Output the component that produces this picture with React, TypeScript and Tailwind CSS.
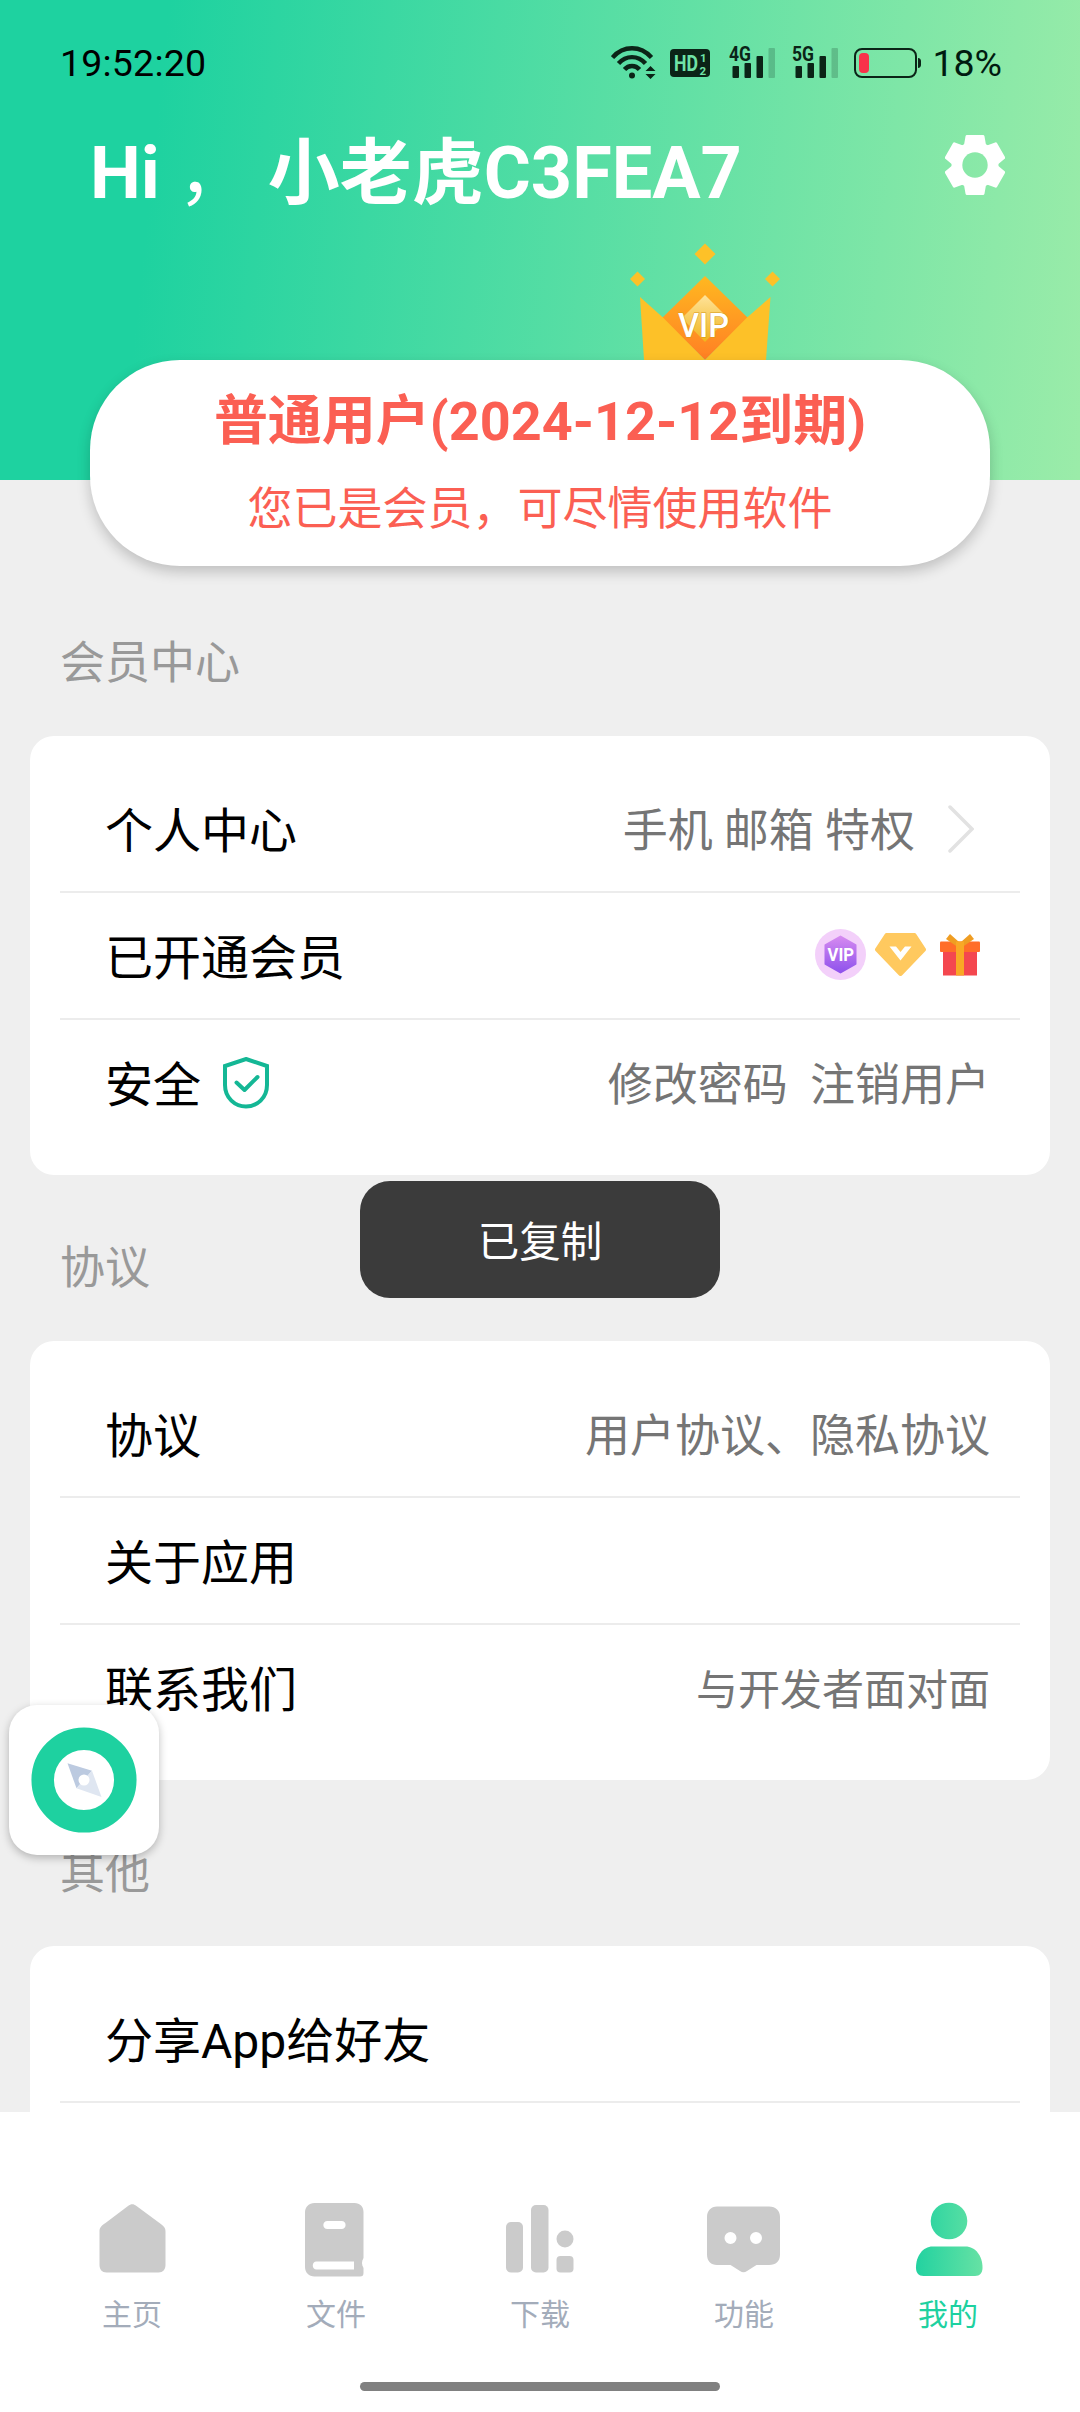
import { useState } from "react";
import type { ReactNode } from "react";

interface Row {
  title: string;
  badge?: ReactNode;
  extra?: string;
  small?: boolean;
  icons?: ReactNode;
}

interface Section {
  label: string;
  rows: Row[];
}

function WifiIcon() {
  return (
    <svg width="46" height="34" viewBox="0 0 46 34" fill="none" stroke="#0b2417" strokeWidth="4.4">
      <path d="M1.5 11.5C12.5 -0.8 29.500 -0.8 40.500 11.500" />
      <path d="M7.500 17.500C15 9 27 9 34.500 17.500" />
      <path d="M13.500 23.500C17.500 18.800 24.500 18.800 28.500 23.500" />
      <circle cx="21" cy="29.500" r="3" fill="#0b2417" stroke="none" />
      <path d="M39.500 20L44.500 25H34.500ZM39.500 33L34.500 28H44.500Z" fill="#0b2417" stroke="none" />
    </svg>
  );
}

function HdIcon() {
  return (
    <svg width="40" height="28" viewBox="0 0 40 28" className="font-bold">
      <rect width="40" height="28" rx="4" fill="#0b2417" />
      <text x="4" y="22" fontSize="22" fill="#6fe3a7" textLength="24" lengthAdjust="spacingAndGlyphs">HD</text>
      <text x="30" y="12.500" fontSize="11.500" fill="#6fe3a7">1</text>
      <text x="29.500" y="25.500" fontSize="11.500" fill="#6fe3a7">2</text>
    </svg>
  );
}

function SignalIcon({ label }: { label: string }) {
  return (
    <svg width="48" height="50" viewBox="0 -8 48 50" fill="#0b2417" className="font-bold">
      <text x="0" y="15" fontSize="20.500" textLength="22" lengthAdjust="spacingAndGlyphs">{label}</text>
      <rect x="3.500" y="20" width="6.500" height="12" rx="1" />
      <rect x="15.500" y="17" width="6.500" height="15" rx="1" />
      <rect x="27.500" y="10" width="6.500" height="22" rx="1" />
      <rect x="39.500" y="2" width="6.500" height="30" rx="1" opacity="0.2" />
    </svg>
  );
}

function BatteryIcon() {
  return (
    <svg width="68" height="30" viewBox="0 0 68 30">
      <rect x="1" y="1" width="61" height="28" rx="7" fill="none" stroke="#0b2417" strokeWidth="2" />
      <rect x="5" y="5" width="10" height="20" rx="4" fill="#f8324a" />
      <path d="M64 10c2 0 3 1.500 3 3v4c0 1.500-1 3-3 3z" fill="#0b2417" />
    </svg>
  );
}

function GearIcon() {
  return (
    <svg width="60" height="60" viewBox="-30 -30 60 60">
      <mask id="gear-hole">
        <rect x="-30" y="-30" width="60" height="60" fill="#fff" />
        <circle r="12.700" fill="#000" />
      </mask>
      <g fill="#fff" stroke="#fff" strokeWidth="3" strokeLinejoin="round" mask="url(#gear-hole)">
        <circle r="22" />
        <path d="M-8 -28.500H8L10 -17V17L8 28.500H-8L-10 17V-17Z" />
        <path d="M-8 -28.500H8L10 -17V17L8 28.500H-8L-10 17V-17Z" transform="rotate(60)" />
        <path d="M-8 -28.500H8L10 -17V17L8 28.500H-8L-10 17V-17Z" transform="rotate(120)" />
      </g>
    </svg>
  );
}

function CrownIcon() {
  return (
    <svg width="152" height="118" viewBox="630 242 152 118" className="font-medium">
      <defs>
        <linearGradient id="crown-gem" x1="0" y1="0" x2="0" y2="1">
          <stop offset="0" stopColor="#ffb820" />
          <stop offset="1" stopColor="#ff7f24" />
        </linearGradient>
        <linearGradient id="crown-core" x1="0" y1="0" x2="0" y2="1">
          <stop offset="0" stopColor="#ffe39a" />
          <stop offset="1" stopColor="#f0b41c" />
        </linearGradient>
      </defs>
      <path d="M705 243.500L715.500 254L705 264.500L694.500 254Z" fill="#fdc128" />
      <path d="M637.500 271.500L645 279L637.500 286.500L630 279Z" fill="#fdc128" />
      <path d="M772.500 271.500L780 279L772.500 286.500L765 279Z" fill="#fdc128" />
      <path d="M705 276L748 318L705 360L662 318Z" fill="url(#crown-gem)" />
      <path d="M705 295L728 318L705 342L682 318Z" fill="url(#crown-core)" />
      <path d="M640 297L663.500 318L705 360H644ZM770.500 297L746.500 318L705 360H766Z" fill="#fdc128" />
      <text x="678" y="337" fontSize="33" fill="#fff" stroke="#d99a18" strokeWidth="1" paintOrder="stroke" textLength="51" lengthAdjust="spacingAndGlyphs">VIP</text>
    </svg>
  );
}

function ShieldIcon() {
  return (
    <svg width="46" height="52" viewBox="0 0 46 52" fill="none" stroke="#14b795" strokeWidth="4">
      <path d="M23 2L44 9V28C44 41 34 49.500 23 49.500C12 49.500 2 41 2 28V9Z" />
      <path d="M13.500 25.500L21.500 33L34.500 20" strokeLinecap="round" strokeLinejoin="round" />
    </svg>
  );
}

function ChevronIcon() {
  return (
    <svg width="26" height="48" viewBox="0 0 26 48" fill="none" stroke="#e2e2e2" strokeWidth="3.500" strokeLinecap="round" className="ml-[33px] mr-[16px]">
      <path d="M2 2L24 24L2 46" />
    </svg>
  );
}

function MemberBadges() {
  return (
    <div className="mr-[1px] flex items-center gap-[9px] pb-[2px]">
      <svg width="51" height="51" viewBox="0 0 51 51" className="font-bold">
        <defs>
          <linearGradient id="vip-hex" x1="0" y1="0" x2="0" y2="1">
            <stop offset="0" stopColor="#d58af0" />
            <stop offset="1" stopColor="#8f52ec" />
          </linearGradient>
        </defs>
        <circle cx="25.500" cy="25.500" r="25.500" fill="#f3d0fa" />
        <path d="M25.500 7.500L40.500 16V35L25.500 43.500L10.500 35V16Z" fill="url(#vip-hex)" stroke="url(#vip-hex)" strokeWidth="2" strokeLinejoin="round" />
        <text x="12.500" y="31.500" fontSize="18" fill="#fff" textLength="26.500" lengthAdjust="spacingAndGlyphs">VIP</text>
      </svg>
      <svg width="51" height="43" viewBox="0 0 51 43">
        <path d="M11.500 2H39.500L49 16.500L25.500 41L2 16.500Z" fill="#ffc95f" stroke="#ffc95f" strokeWidth="4" strokeLinejoin="round" />
        <path d="M14.500 13.500H21L25.500 19L30 13.500H36.500L25.500 27.500Z" fill="#fff" />
      </svg>
      <svg width="40" height="42" viewBox="0 0 40 42" className="ml-[5px] mr-[9px]">
        <path d="M3 17H37V41.500H3Z" fill="#f4474f" />
        <rect y="7.500" width="40" height="10.500" rx="1" fill="#ff6d28" />
        <path d="M10 0L19 8V14L6 5Z" fill="#ef9d22" />
        <path d="M30 0L21 8V14L34 5Z" fill="#ef9d22" />
        <rect x="16" y="7.500" width="8" height="34" fill="#f9a825" />
      </svg>
    </div>
  );
}

const sections: Section[] = [
  {
    label: "会员中心",
    rows: [
      { title: "个人中心", extra: "手机 邮箱 特权", icons: <ChevronIcon /> },
      { title: "已开通会员", icons: <MemberBadges /> },
      { title: "安全", badge: <ShieldIcon />, extra: "修改密码  注销用户" },
    ],
  },
  {
    label: "协议",
    rows: [
      { title: "协议", extra: "用户协议、隐私协议" },
      { title: "关于应用" },
      { title: "联系我们", extra: "与开发者面对面", small: true },
    ],
  },
  {
    label: "其他",
    rows: [{ title: "分享App给好友" }, { title: "" }],
  },
];

const tabs = [
  {
    name: "主页",
    icon: (
      <path d="M9.500 30L32 13C35 10.800 37.500 10.800 40.500 13L65.500 31.500C68.500 34 69.500 35.500 69.500 38.500V72C69.500 76.500 67 79.500 62.500 79.500H10.500C6 79.500 3.500 76.500 3.500 72V38.500C3.500 35 5 33 9.500 30Z" />
    ),
  },
  {
    name: "文件",
    icon: (
      <path fillRule="evenodd" d="M14.500 10H54.500C60 10 63.500 13.500 63.500 19V65C61.500 68 61.500 72 63.500 75V80C63.500 82.500 62.500 83.500 60 83.500H14.500C9 83.500 5 79.500 5 74V19.500C5 14 9 10 14.500 10ZM27.500 28C22 28 22 36 27.500 36H41.500C47 36 47 28 41.500 28ZM16.500 68.500C11.500 68.500 11.500 76.500 16.500 76.500H54V68.500Z" />
    ),
  },
  {
    name: "下载",
    icon: (
      <>
        <rect x="2" y="29" width="17" height="50.500" rx="5" />
        <rect x="27" y="12" width="17.500" height="67.500" rx="5" />
        <circle cx="61" cy="46" r="8.500" />
        <rect x="52.500" y="63" width="17" height="16.500" rx="4" />
      </>
    ),
  },
  {
    name: "功能",
    icon: (
      <path fillRule="evenodd" d="M9 13.500H61C68 13.500 72 18 72 24V61.500C72 68 68 72 61 72H48.500L39 78Q35.500 80.500 32 78L22.500 72H9C3 72 -1 68 -1 61.500V24C-1 18 3 13.500 9 13.500ZM22.500 39A6 6 0 1 0 22.500 51A6 6 0 1 0 22.500 39ZM48 39A6 6 0 1 0 48 51A6 6 0 1 0 48 39Z" />
    ),
  },
  {
    name: "我的",
    icon: (
      <>
        <defs>
          <linearGradient id="mine" x1="0" y1="0" x2="72" y2="0" gradientUnits="userSpaceOnUse">
            <stop offset="0" stopColor="#1ed1a0" />
            <stop offset="1" stopColor="#68e2a4" />
          </linearGradient>
        </defs>
        <circle cx="37" cy="28" r="18.300" />
        <path d="M20.500 53.500H53.500C63.500 53.500 70.500 63 70.500 74.500C70.500 80 68 83 63 83H11.500C6.500 83 4 80 4 74.500C4 63 11 53.500 20.500 53.500Z" />
      </>
    ),
  },
];

function ListRow({ row }: { row: Row }) {
  return (
    <div className="box-content flex h-[125px] items-center justify-between">
      <div className="flex items-center gap-[22px] pl-[45px] text-[48px] leading-[72px] text-black">
        <span className="pt-[6px]">{row.title}</span>
        {row.badge}
      </div>
      <div className="flex items-center whitespace-pre pr-[30px] leading-[68px] text-[#757575]">
        {row.extra && <span className={`pt-[7px] ${row.small ? "text-[42px]" : "text-[45px]"}`}>{row.extra}</span>}
        {row.icons}
      </div>
    </div>
  );
}

export default function App() {
  const [active, setActive] = useState("我的");

  return (
    <div className="relative flex h-[2412px] w-[1080px] flex-col overflow-hidden bg-[#efefef] font-['Roboto','Noto_Sans_CJK_SC',sans-serif]">
      <div className="min-h-0 flex-1 overflow-hidden">
        <header className="relative h-[480px] bg-[linear-gradient(96deg,#1ed2a0_15%,#9beca9_100%)]">
          <div className="flex h-[120px] items-center justify-between pl-[60px] pr-[78px] pt-[6px] text-[37.5px] text-[#001b10]">
            <span className="tracking-[0.2px] text-black">19:52:20</span>
            <div className="flex items-center">
              <WifiIcon />
              <span className="ml-[13px]"><HdIcon /></span>
              <span className="ml-[19px]"><SignalIcon label="4G" /></span>
              <span className="ml-[15px]"><SignalIcon label="5G" /></span>
              <span className="ml-[14px]"><BatteryIcon /></span>
              <span className="ml-[10px]">18%</span>
            </div>
          </div>
          <div className="flex h-[90px] items-center justify-between pl-[90px] pr-[75px]">
            <h1 className="whitespace-pre pt-[18px] text-[72px] font-bold leading-[90px] text-white">
              Hi <span className="font-normal">，</span> 小老虎C3FEA7
            </h1>
            <button><GearIcon /></button>
          </div>
          <div className="absolute left-[630px] top-[242px]"><CrownIcon /></div>
        </header>

        <div className="relative mx-[90px] -mt-[120px] flex h-[206px] flex-col items-center rounded-[90px] bg-white pt-[22px] text-[#fb5f53] shadow-[0_6px_14px_rgba(0,0,0,0.2)]">
          <p className="text-[54px] font-bold leading-[80px]">普通用户(2024-12-12到期)</p>
          <p className="mt-[14px] text-[45px] leading-[68px]">您已是会员，可尽情使用软件</p>
        </div>

        {sections.map((section, i) => (
          <section key={section.label}>
            <h2 className={`flex items-center pl-[60px] text-[45px] text-[#999] ${i === 0 ? "h-[170px] pt-[26px]" : "h-[166px] pt-[22px]"}`}>
              {section.label}
            </h2>
            <div className="mx-[30px] divide-y-2 divide-[#ececec] rounded-[24px] bg-white px-[30px] py-[30px]">
              {section.rows.map(row => <ListRow key={row.title} row={row} />)}
            </div>
          </section>
        ))}
      </div>

      <nav className="flex h-[300px] shrink-0 flex-col items-center bg-white">
        <div className="flex h-[270px] w-[1020px] pt-[81px]">
          {tabs.map(tab => (
            <button key={tab.name} onClick={() => setActive(tab.name)} className="flex flex-1 flex-col items-center">
              <svg width="74" height="90" viewBox="-1 0 74 90" fill={active === tab.name ? "url(#mine)" : "#cbcbcb"}>
                {tab.icon}
              </svg>
              <span className={`mt-[10px] text-[30px] leading-[44px] ${active === tab.name ? "text-[#1ed1a0]" : "text-[#a3acba]"}`}>{tab.name}</span>
            </button>
          ))}
        </div>
        <div className="h-[9px] w-[360px] rounded-full bg-[#808080]" />
      </nav>

      <div className="absolute left-[360px] top-[1181px] flex h-[117px] w-[360px] items-center justify-center rounded-[30px] bg-[#3b3b3b] pt-[7px] text-[41.500px] text-white">
        已复制
      </div>

      <button className="absolute left-[9px] top-[1705px] flex h-[150px] w-[150px] items-center justify-center rounded-[28px] bg-white shadow-[0_3px_8px_rgba(0,0,0,0.25)]">
        <svg width="106" height="106" viewBox="-53 -53 106 106">
          <circle r="41.300" fill="#fff" stroke="#1ed1a0" strokeWidth="22.500" />
          <path d="M-16.500 -16.700L8 -9.300L-7.500 8.300Z" fill="#bccae0" />
          <path d="M8 -9.300L17.500 17L-7.500 8.300Z" fill="#dfe6f1" />
          <circle r="5.500" fill="#fff" />
        </svg>
      </button>
    </div>
  );
}
